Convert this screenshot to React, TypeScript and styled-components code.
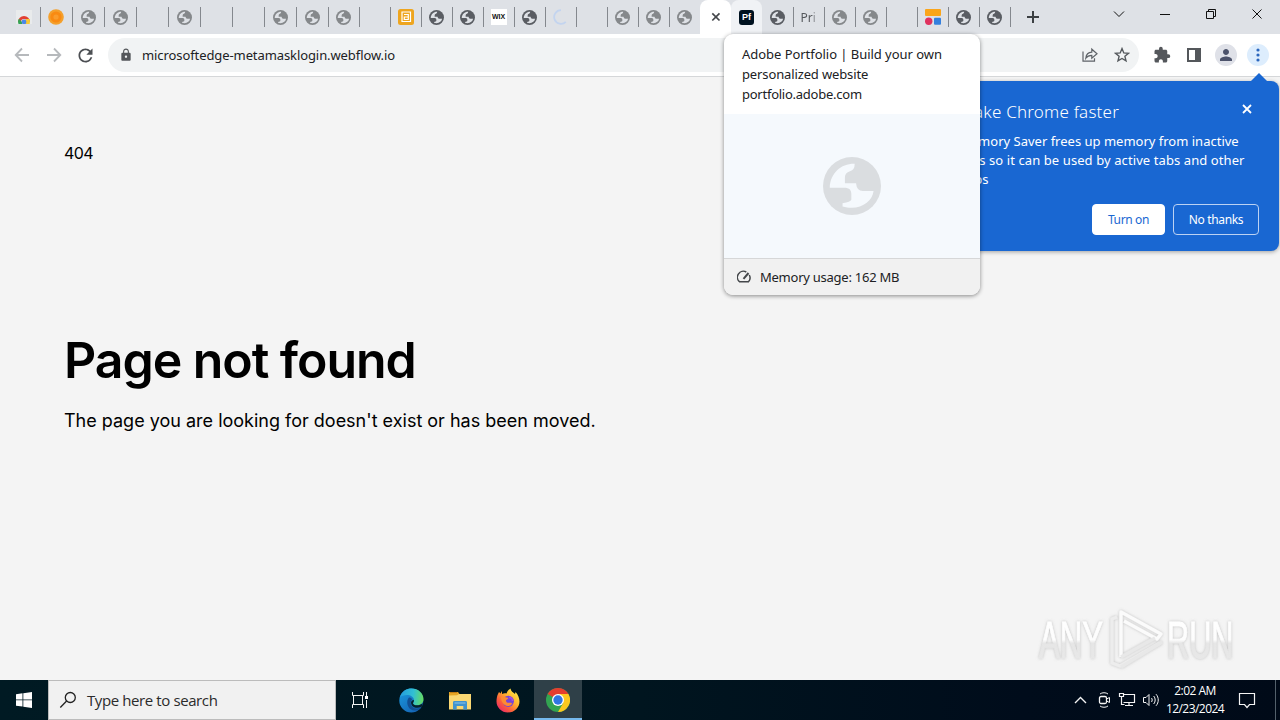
import React from 'react';
import styled, { createGlobalStyle, css } from 'styled-components';
import { MdExtension, MdPerson, MdLock, MdRefresh } from 'react-icons/md';

type TabKind =
  | 'store'
  | 'orange'
  | 'globe'
  | 'globeDark'
  | 'empty'
  | 'amazon'
  | 'wix'
  | 'loading'
  | 'active'
  | 'portfolio'
  | 'text'
  | 'blocks';

const TABS: TabKind[] = [
  'store', 'orange', 'globe', 'globe', 'empty', 'globe', 'empty', 'empty',
  'globe', 'globe', 'globe', 'empty', 'amazon', 'globeDark', 'globeDark', 'wix',
  'globeDark', 'loading', 'empty', 'globe', 'globe', 'globe', 'active', 'portfolio',
  'globeDark', 'text', 'globe', 'globe', 'empty', 'blocks', 'globeDark', 'globeDark',
];

// first tab and the ones touching the active / hovered tab
const NO_DIVIDER = [0, 22, 23, 24];

const Globe = ({ size, color, land }: { size: number; color: string; land: string }) => (
  <svg width={size} height={size} viewBox="22 21 172 172">
    <circle cx="108" cy="107" r="86" fill={color} />
    <path
      d="M116 41C76 40 44 68 42 112H90Q106 114 106 130V148Q104 155 80 158V168C130 182 168 155 172 122H140Q122 122 120 99H87V82Q87 67 102 63Q116 60 116 41Z"
      fill={land}
    />
  </svg>
);

const Favicon = ({ kind }: { kind: TabKind }) => {
  switch (kind) {
    case 'store':
      return (
        <svg width="16" height="16" viewBox="0 0 16 16">
          <path d="M0 1h16v14H0z" fill="#e9ebec" />
          <path d="M2 13a6 6 0 0 1 12 0h-3a3 3 0 0 0-6 0z" fill="#e34133" />
          <path d="M2 13a6 6 0 0 1 1-3.3L6 13v2H2.5z" fill="#35a455" />
          <path d="M10 10h3.4a6 6 0 0 1 .3 5H9z" fill="#f7c933" />
          <circle cx="8" cy="13" r="2.4" fill="#4b87e8" />
          <path d="M0 15h16v1H0z" fill="#dee1e6" />
        </svg>
      );
    case 'orange':
      return (
        <svg width="18" height="16" viewBox="0 0 18 16">
          <circle cx="9" cy="8" r="7.8" fill="#f4a02c" />
          <circle cx="9" cy="8" r="5.6" fill="#f98a12" />
          <circle cx="9" cy="8" r="2.6" fill="#fa9c2c" />
        </svg>
      );
    case 'globe':
      return <Globe size={15} color="#85888b" land="#dee1e6" />;
    case 'globeDark':
      return <Globe size={15} color="#5a5d63" land="#dee1e6" />;
    case 'amazon':
      return (
        <svg width="16" height="16" viewBox="0 0 16 16" fill="none" stroke="#fff">
          <rect width="16" height="16" rx="2.5" fill="#eea51f" stroke="none" />
          <path d="M4 3h8.500v9.500H4zM6 5.500h4.300v5H6.300V8h4" strokeWidth="1.2" />
        </svg>
      );
    case 'wix':
      return <WixMark>WIX</WixMark>;
    case 'loading':
      return (
        <svg width="16" height="16" viewBox="0 0 16 16" fill="none" stroke="#c3d4ef" strokeWidth="1.8">
          <path d="M8 1.2a6.8 6.8 0 1 0 4.8 11.6" />
        </svg>
      );
    case 'active':
      return (
        <svg width="10" height="10" viewBox="0 0 10 10" stroke="#44474b" strokeWidth="1.7">
          <path d="M1.3 1.3l7.2 7.2M8.5 1.3L1.3 8.5" />
        </svg>
      );
    case 'portfolio':
      return <PortfolioMark>Pf</PortfolioMark>;
    case 'text':
      return <TabText>Pri</TabText>;
    case 'blocks':
      return (
        <svg width="16" height="16" viewBox="0 0 16 16">
          <rect width="16" height="7" rx="1" fill="#faa51a" />
          <circle cx="3.7" cy="12.2" r="3.7" fill="#e0325f" />
          <rect x="9" y="8.7" width="7" height="7" rx="1" fill="#3580de" />
        </svg>
      );
    default:
      return null;
  }
};

const ShareIcon = () => (
  <svg width="16" height="16" viewBox="0 0 16 16" fill="none" stroke="#5f6368" strokeWidth="1.2">
    <path d="M1 4.5v9.7h11.5v-3" />
    <path d="M3.8 11.2c.4-4 2.7-5.8 6-6V2.2L15 6.8l-5.2 4.5V8.4c-2.8 0-4.6.8-6 2.8z" />
  </svg>
);

const StarIcon = () => (
  <svg width="16" height="16" viewBox="0 0 16 16" fill="none" stroke="#54585c" strokeWidth="1.4">
    <path d="M8 1.6l1.8 4.3 4.7.4-3.6 3 1.1 4.6L8 11.5l-4 2.4 1.1-4.6-3.6-3 4.7-.4z" />
  </svg>
);

const EdgeLogo = () => (
  <svg width="25" height="25" viewBox="0 0 25 25">
    <defs>
      <linearGradient id="edgeTop" x1="0" y1="0.4" x2="1" y2="0.5">
        <stop offset="0" stopColor="#259ddd" />
        <stop offset="0.55" stopColor="#31bfd4" />
        <stop offset="1" stopColor="#66dc61" />
      </linearGradient>
      <linearGradient id="edgeLow" x1="0" y1="0" x2="0.8" y2="1">
        <stop offset="0" stopColor="#1b9bdf" />
        <stop offset="1" stopColor="#1462b4" />
      </linearGradient>
    </defs>
    <circle cx="12.3" cy="12.5" r="12" fill="url(#edgeLow)" />
    <path d="M1 9C3 3 7.500 .5 12.500.5c7 0 12 5 12 10.500 0 4-3 6.300-6.500 6.300-2.300 0-4-.8-4-1.900 0-.7 1-1.200 1-3C15 9 11.500 7 8 7 5 7 2 8 1 9z" fill="url(#edgeTop)" />
    <path d="M10 9.500c-3 3-2 9.500 2 12 3.500 2 8 1 10.500-2-5 2.500-10.500.5-10.700-4.500-.1-2 .8-3 1.400-3.500-.6-1.600-2-2.300-3.200-2z" fill="#124f93" />
    <path d="M12 14.500c.3-1.500 1-2.200 2.800-2.500.5 1.700-.8 2.300-.8 3.200 0 1.200 1.800 2.100 4 2.100 2 0 4-.5 5.600-2l-.8 3.400c-5 2.300-10.500 1-10.800-4.200z" fill="#06202b" />
  </svg>
);

const FolderIcon = () => (
  <svg width="22" height="19" viewBox="0 0 22 19">
    <path d="M0 1h9l1.500 2H22v4H0z" fill="#e5a524" />
    <path d="M1 1h7v1H1z" fill="#c47d12" />
    <path d="M0 4.500l8-.2 2-1.300h12v15.500H0z" fill="#fad873" />
    <path d="M4 11.500c0-1 .5-1.500 1.500-1.500h11c1 0 1.500.5 1.500 1.500v7h-3.700V15H7.700v3.500H4z" fill="#3f93cf" />
    <path d="M5.500 12h11" stroke="#8dc3e8" />
  </svg>
);

const FirefoxLogo = () => (
  <svg width="24" height="25" viewBox="0 0 24 25">
    <defs>
      <linearGradient id="foxFire" x1="0.9" y1="0.05" x2="0.1" y2="0.95">
        <stop offset="0" stopColor="#fff04a" />
        <stop offset="0.4" stopColor="#ffb02d" />
        <stop offset="0.7" stopColor="#fb5c3c" />
        <stop offset="1" stopColor="#e8226f" />
      </linearGradient>
    </defs>
    <path d="M2 6l1-2 1.500 1.500L6 3v3c1.500-.7 3-.8 4.500-.5C11.500 2.500 13 1.500 14.500.5c.3 2.500 2.500 4 4.500 5.500l.5-2c2.500 2.500 4 6 4 9.500 0 6-5 11-11.500 11S.5 19.500.5 13.500C.5 10.500 1 8 2 6z" fill="url(#foxFire)" />
    <circle cx="12.300" cy="13.300" r="5.600" fill="#7544d8" />
    <path d="M5 9c2-1 4-.7 5 .5 1.200.2 2 0 2.300.5-.2 1-1.800 1.600-2.300 2.200 0 1.500.5 2.800 3 2.600 2-.2 3 .2 3 1-1 2.500-5 3-7.500 1S5 12 5 9z" fill="#fd8b32" />
    <path d="M13 9.500c2 0 3.500 1.500 3.500 3.500" stroke="#a54ee0" strokeWidth="1.500" fill="none" />
  </svg>
);

const ChromeLogo = () => (
  <svg width="24" height="24" viewBox="0 0 24 24">
    <circle cx="12" cy="12" r="12" fill="#33a451" />
    <path d="M12 12L1.600 6A12 12 0 0 1 22.400 6z" fill="#e43e2f" />
    <path d="M12 6h10.400A12 12 0 0 1 12 24l5.200-9z" fill="#fcc820" />
    <circle cx="12" cy="12" r="6" fill="#fff" />
    <circle cx="12" cy="12" r="4.700" fill="#2f76e2" />
  </svg>
);

const Watermark = () => (
  <svg width="210" height="70" viewBox="0 0 210 70">
    <defs>
      <linearGradient id="markFill" x1="0" y1="0" x2="0" y2="1">
        <stop offset="0" stopColor="#fff" />
        <stop offset="0.5" stopColor="#fdfdfd" />
        <stop offset="0.56" stopColor="#e6e6e6" />
        <stop offset="1" stopColor="#e9e9e9" />
      </linearGradient>
      <filter id="markShadow" x="-10%" y="-10%" width="120%" height="120%">
        <feDropShadow dx="0" dy="0" stdDeviation="1.6" floodColor="#888" floodOpacity="0.5" />
      </filter>
    </defs>
    <g filter="url(#markShadow)">
      <g
        fill="url(#markFill)"
        stroke="url(#markFill)"
        strokeWidth="0.8"
        fontFamily="'Liberation Sans', sans-serif"
        fontSize="52"
      >
        <text transform="translate(9 54) scale(.6 1)">ANY</text>
        <text transform="translate(137 54) scale(.59 1)">RUN</text>
      </g>
      <g fill="none" stroke="#fbfbfb" strokeWidth="3.400" strokeLinejoin="round">
        <path d="M87 13l-5 2v44l8 3 40-23" stroke="#ededed" />
        <path d="M91 53V8l40 22-4 5-33-18" />
        <path d="M91 53l34-19M91 63l41-25" stroke="#e8e8e8" />
      </g>
    </g>
  </svg>
);

const App = () => {
  return (
    <Screen>
      <GlobalStyle />
      <TabStrip>
        {TABS.map((kind, i) => (
          <Tab key={i} $wide={i < 10} $state={kind} $divider={!NO_DIVIDER.includes(i)}>
            <Favicon kind={kind} />
          </Tab>
        ))}
        <NewTab>
          <svg width="12" height="12" viewBox="0 0 12 12" stroke="#3c4043" strokeWidth="2">
            <path d="M6 0v12M0 6h12" />
          </svg>
        </NewTab>
        <WindowControls>
          <svg width="12" height="12" viewBox="0 0 12 12"><path d="M1 3.500l5 5 5-5" /></svg>
          <svg width="12" height="12" viewBox="0 0 12 12"><path d="M1 6.500h10" /></svg>
          <svg width="12" height="12" viewBox="0 0 12 12"><path d="M1.500 3.500h7v7h-7zM3.500 3.500v-2h7v7h-2" /></svg>
          <svg width="12" height="12" viewBox="0 0 12 12"><path d="M1.500 1.500l9 9M10.500 1.500l-9 9" /></svg>
        </WindowControls>
      </TabStrip>

      <Toolbar>
        <NavButtons>
          <svg width="16" height="16" viewBox="0 0 16 16" fill="none" stroke="#b6b9bc" strokeWidth="1.800">
            <path d="M15 8H2M8 1.500L1.700 8 8 14.500" />
          </svg>
          <svg width="16" height="16" viewBox="0 0 16 16" fill="none" stroke="#b6b9bc" strokeWidth="1.800">
            <path d="M1 8h13M8 1.500L14.300 8 8 14.500" />
          </svg>
          <MdRefresh size={21} color="#4c4f53" />
        </NavButtons>
        <Omnibox>
          <MdLock size={14} color="#54575b" />
          <Url>microsoftedge-metamasklogin.webflow.io</Url>
          <ShareIcon />
          <StarIcon />
        </Omnibox>
        <Actions>
          <MdExtension size={18} color="#54575b" />
          <svg width="14" height="14" viewBox="0 0 14 14">
            <path d="M0 0h14v14H0zM2 2v10h6V2z" fill="#54575b" fillRule="evenodd" />
          </svg>
          <RoundButton $bg="#dfe1e8">
            <MdPerson size={18} color="#4c536b" />
          </RoundButton>
          <RoundButton $bg="#ddedfd">
            <svg width="4" height="14" viewBox="0 0 4 14" fill="#2c67bd">
              <circle cx="2" cy="2" r="1.600" />
              <circle cx="2" cy="7" r="1.600" />
              <circle cx="2" cy="12" r="1.600" />
            </svg>
          </RoundButton>
        </Actions>
      </Toolbar>

      <Page>
        <Code>404</Code>
        <Title>Page not found</Title>
        <Lead>The page you are looking for doesn't exist or has been moved.</Lead>
        <WatermarkBox>
          <Watermark />
        </WatermarkBox>
      </Page>

      <Taskbar>
        <StartButton>
          <svg width="16" height="16" viewBox="0 0 16 16" fill="#fff">
            <path d="M0 2.200l6.500-.9v6.200H0zM7.300 1.200L16 0v7.500H7.300zM0 8.300h6.500v6.300L0 13.700zM7.300 8.300H16V16l-8.700-1.200z" />
          </svg>
        </StartButton>
        <Search>
          <svg width="18" height="18" viewBox="0 0 18 18" fill="none" stroke="#222" strokeWidth="1.300">
            <circle cx="11.300" cy="6.500" r="5" />
            <path d="M7.600 10L1.300 16.500" />
          </svg>
          <SearchText>Type here to search</SearchText>
        </Search>
        <TaskButton $width={48}>
          <svg width="18" height="18" viewBox="0 0 18 18" fill="none" stroke="#f4f4f4">
            <path d="M1.500 1v3.500h11V1M1.500 17v-3.500h11V17M2.500 4.500v9M11.500 4.500v9M15.500 1v4M15.500 9v8" />
            <path d="M14 5h3v3h-3z" fill="#fff" stroke="none" />
          </svg>
        </TaskButton>
        <TaskButton $width={54}><EdgeLogo /></TaskButton>
        <TaskButton $width={44}><FolderIcon /></TaskButton>
        <TaskButton $width={52}><FirefoxLogo /></TaskButton>
        <TaskButton $width={48} $active><ChromeLogo /></TaskButton>
        <Tray>
          <svg width="13" height="8" viewBox="0 0 13 8"><path d="M1 7l5.500-5.500L12 7" strokeWidth="1.400" /></svg>
          <svg width="14" height="18" viewBox="0 0 14 18">
            <rect x="2.500" y="5.500" width="7" height="7" rx="1.500" strokeWidth="1.300" />
            <path d="M9.500 8l3-1.500v5l-3-1.500M3 3c2-1.700 6-1.700 8 0M3 15c2 1.700 6 1.700 8 0" />
          </svg>
          <svg width="18" height="16" viewBox="0 0 18 16">
            <path d="M5.500 2.500h11v8h-11M11 10.500v3M7 13.500h8M1.500 1.500h4v3h-4zM3.500 4.500v8h3" strokeWidth="1.200" />
          </svg>
          <svg width="18" height="16" viewBox="0 0 18 16">
            <path d="M1.500 5.500H4l3-3v11l-3-3H1.500zM9.500 6c.9 1.200.9 2.800 0 4M11.700 4c2 2.300 2 5.700 0 8M14 2.200c3 3.300 3 8.300 0 11.600" />
          </svg>
        </Tray>
        <Clock>
          <span>2:02 AM</span>
          <span>12/23/2024</span>
        </Clock>
        <Notifications>
          <svg width="18" height="18" viewBox="0 0 18 18">
            <path d="M1.500 2.500h15v11h-5l-2.500 3-2.500-3h-5z" strokeWidth="1.200" />
          </svg>
        </Notifications>
      </Taskbar>

      <Promo>
        <PromoArrow />
        <PromoTitle>Make Chrome faster</PromoTitle>
        <PromoClose>
          <svg width="10" height="10" viewBox="0 0 10 10" stroke="#fff" strokeWidth="1.800">
            <path d="M1 1l8 8M9 1L1 9" />
          </svg>
        </PromoClose>
        <PromoText>
          <PromoLine>Memory Saver frees up memory from inactive</PromoLine>
          <PromoLine $spacing={0.09}>tabs so it can be used by active tabs and other</PromoLine>
          <PromoLine>apps</PromoLine>
        </PromoText>
        <PromoButtons>
          <PromoButton $primary $width={73}>Turn on</PromoButton>
          <PromoButton $width={86}>No thanks</PromoButton>
        </PromoButtons>
      </Promo>

      <HoverCard>
        <CardHead>
          <CardLine $spacing={-0.04}>Adobe Portfolio | Build your own</CardLine>
          <CardLine $spacing={-0.13}>personalized website</CardLine>
          <CardLine $spacing={-0.25}>portfolio.adobe.com</CardLine>
        </CardHead>
        <Preview>
          <Globe size={58} color="#dadde0" land="#f5f9fd" />
        </Preview>
        <CardFoot>
          <svg width="14" height="14" viewBox="0 0 14 14" fill="none" stroke="#44474a" strokeWidth="1.500">
            <path d="M9.300 2A6 6 0 0 0 2.500 11.800h9A6 6 0 0 0 12.300 5" />
            <path d="M6.500 8.800L11.500 3" strokeWidth="2" />
          </svg>
          <span>Memory usage: 162 MB</span>
        </CardFoot>
      </HoverCard>
    </Screen>
  );
};

export default App;

const GlobalStyle = createGlobalStyle`
  * {
    box-sizing: border-box;
  }
  body {
    margin: 0;
    overflow: hidden;
    font-family: 'Noto Sans', sans-serif;
  }
  svg {
    display: block;
    flex: none;
  }
`;

const Screen = styled.div`
  position: relative;
  display: flex;
  flex-direction: column;
  width: 1280px;
  height: 720px;
  background: #f4f4f4;
`;

const TabStrip = styled.div`
  display: flex;
  height: 34px;
  padding-left: 8px;
  background: #dee1e6;
`;

const divider = css`
  background: linear-gradient(#84888e, #84888e) left 7px / 1px 20px no-repeat;
`;

const Tab = styled.div<{ $wide: boolean; $state: TabKind; $divider: boolean }>`
  display: flex;
  flex: none;
  align-items: center;
  justify-content: center;
  width: ${({ $wide }) => ($wide ? 32 : 31)}px;
  height: 34px;
  overflow: hidden;
  ${({ $divider }) => $divider && divider}
  ${({ $state }) =>
    $state === 'active' &&
    css`
      background: #fff;
      border-radius: 8px 8px 0 0;
    `}
  ${({ $state }) =>
    $state === 'portfolio' &&
    css`
      background: #f0f2f5;
      border-radius: 8px 8px 0 0;
    `}
`;

const WixMark = styled.span`
  width: 16px;
  background: #fff;
  color: #111;
  font: bold 7px/16px 'Liberation Sans', sans-serif;
  text-align: center;
`;

const PortfolioMark = styled.span`
  width: 15px;
  background: #001220;
  border-radius: 3px;
  color: #fff;
  font: bold 9px/15px 'Liberation Sans', sans-serif;
  text-align: center;
`;

const TabText = styled.span`
  width: 16px;
  overflow: hidden;
  color: #55585c;
  font-size: 12px;
  mask-image: linear-gradient(90deg, #000 70%, transparent);
`;

const NewTab = styled.div`
  display: flex;
  align-items: center;
  justify-content: center;
  width: 46px;
  ${divider}
`;

const WindowControls = styled.div`
  display: flex;
  gap: 34px;
  margin: 8px 17px 0 auto;
  svg {
    fill: none;
    stroke: #111;
  }
`;

const Toolbar = styled.div`
  display: flex;
  align-items: center;
  height: 43px;
  background: #fff;
  border-bottom: 1px solid #d5d7d9;
`;

const NavButtons = styled.div`
  display: flex;
  gap: 16px;
  align-items: center;
  width: 108px;
  padding-left: 14px;
  svg:last-child {
    margin-left: -3px;
  }
`;

const Omnibox = styled.div`
  display: flex;
  align-items: center;
  width: 1031px;
  height: 34px;
  padding: 0 9px 0 11px;
  background: #f1f3f4;
  border-radius: 17px;
  svg:last-child {
    margin-left: 16px;
  }
`;

const Url = styled.span`
  flex: 1;
  margin-left: 9px;
  color: #202124;
  font-size: 13px;
  letter-spacing: -0.09px;
`;

const Actions = styled.div`
  display: flex;
  align-items: center;
  margin-left: 14px;
  gap: 10px;
  svg:nth-child(2) {
    margin: 0 4px 0 6px;
  }
`;

const RoundButton = styled.div<{ $bg: string }>`
  display: flex;
  align-items: center;
  justify-content: center;
  width: 22px;
  height: 22px;
  background: ${({ $bg }) => $bg};
  border-radius: 50%;
`;

const Page = styled.main`
  position: relative;
  height: 603px;
  padding: 64px 64px 0;
  color: #000;
  font-family: Inter, sans-serif;
`;

const Code = styled.div`
  height: 188px;
  font-size: 16px;
  line-height: 24px;
  letter-spacing: -0.6px;
`;

const Title = styled.h1`
  margin: 0;
  font-size: 50px;
  font-weight: 600;
  line-height: 62px;
  letter-spacing: -1.05px;
`;

const Lead = styled.p`
  margin: 16px 0 0;
  font-size: 18px;
  line-height: 27px;
`;

const WatermarkBox = styled.div`
  position: absolute;
  top: 527px;
  left: 1030px;
`;

const Taskbar = styled.div`
  display: flex;
  height: 40px;
  background: linear-gradient(90deg, #001a23, #00151f 50%, #000c1b 80%, #000a18);
  color: #fff;
`;

const StartButton = styled.div`
  display: flex;
  align-items: center;
  justify-content: center;
  width: 48px;
`;

const Search = styled.div`
  display: flex;
  align-items: center;
  width: 288px;
  padding-left: 10px;
  background: #f1f1f1;
  border: 1px solid #bcbcbc;
`;

const SearchText = styled.span`
  margin-left: 10px;
  color: #2b2b2b;
  font-family: 'Open Sans', sans-serif;
  font-size: 15px;
  letter-spacing: -0.4px;
`;

const TaskButton = styled.div<{ $active?: boolean; $width: number }>`
  display: flex;
  align-items: center;
  justify-content: center;
  width: ${({ $width }) => $width}px;
  ${({ $active }) =>
    $active &&
    css`
      background: #2f4048;
      box-shadow: inset 0 -2px #76b9ed;
    `}
`;

const Tray = styled.div`
  display: flex;
  align-items: center;
  gap: 8px;
  margin-left: auto;
  svg {
    fill: none;
    stroke: #f4f4f4;
  }
  svg:nth-child(2) {
    margin: 0 -1px 0 2px;
  }
  svg:nth-child(4) {
    margin-left: -2px;
  }
`;

const Clock = styled.div`
  display: flex;
  flex-direction: column;
  align-items: center;
  width: 70px;
  padding-top: 2px;
  font-family: 'Open Sans', sans-serif;
  font-size: 12px;
  line-height: 18px;
  letter-spacing: -0.55px;
`;

const Notifications = styled.div`
  display: flex;
  align-items: center;
  width: 46px;
  margin-right: 4px;
  padding-left: 8px;
  border-right: 1px solid #53606b;
  svg {
    fill: none;
    stroke: #f4f4f4;
  }
`;

const Promo = styled.div`
  position: absolute;
  top: 81px;
  right: 1px;
  width: 340px;
  height: 170px;
  padding: 18px 20px 16px;
  background: #1967d2;
  border-radius: 8px;
  box-shadow: 0 1px 4px rgba(0, 0, 0, 0.35);
  color: #fff;
`;

const PromoArrow = styled.div`
  position: absolute;
  top: -8px;
  right: 12px;
  border: 8px solid transparent;
  border-top: 0;
  border-bottom-color: #1967d2;
`;

const PromoTitle = styled.div`
  font-size: 17px;
  font-weight: 300;
  line-height: 26px;
  letter-spacing: 0.2px;
`;

const PromoClose = styled.div`
  position: absolute;
  top: 23px;
  right: 27px;
`;

const PromoText = styled.div`
  margin-top: 7px;
  font-size: 13px;
  line-height: 19px;
`;

const PromoLine = styled.div<{ $spacing?: number }>`
  letter-spacing: ${({ $spacing = 0 }) => $spacing}px;
  white-space: nowrap;
`;

const PromoButtons = styled.div`
  display: flex;
  justify-content: flex-end;
  gap: 8px;
  margin-top: 15px;
`;

const PromoButton = styled.button<{ $primary?: boolean; $width: number }>`
  width: ${({ $width }) => $width}px;
  height: 31px;
  padding: 0;
  background: ${({ $primary }) => ($primary ? '#fff' : 'transparent')};
  border: 1px solid ${({ $primary }) => ($primary ? '#fff' : '#bcd2f3')};
  border-radius: 4px;
  color: ${({ $primary }) => ($primary ? '#1967d2' : '#fff')};
  font: 12px 'Noto Sans', sans-serif;
  letter-spacing: -0.35px;
`;

const HoverCard = styled.div`
  position: absolute;
  top: 34px;
  left: 724px;
  width: 256px;
  height: 261px;
  overflow: hidden;
  background: #fff;
  border-radius: 9px;
  box-shadow: 0 1px 4px rgba(0, 0, 0, 0.45);
  color: #202124;
  font-size: 13px;
`;

const CardHead = styled.div`
  height: 80px;
  padding: 10px 18px 0;
`;

const CardLine = styled.div<{ $spacing: number }>`
  letter-spacing: ${({ $spacing }) => $spacing}px;
  line-height: 20px;
  white-space: nowrap;
`;

const Preview = styled.div`
  display: flex;
  align-items: center;
  justify-content: center;
  height: 144px;
  background: #f5f9fd;
`;

const CardFoot = styled.div`
  display: flex;
  align-items: center;
  gap: 9px;
  height: 37px;
  padding-left: 13px;
  background: #f1f1f1;
  border-top: 1px solid #d6d7d8;
  letter-spacing: -0.25px;
`;
